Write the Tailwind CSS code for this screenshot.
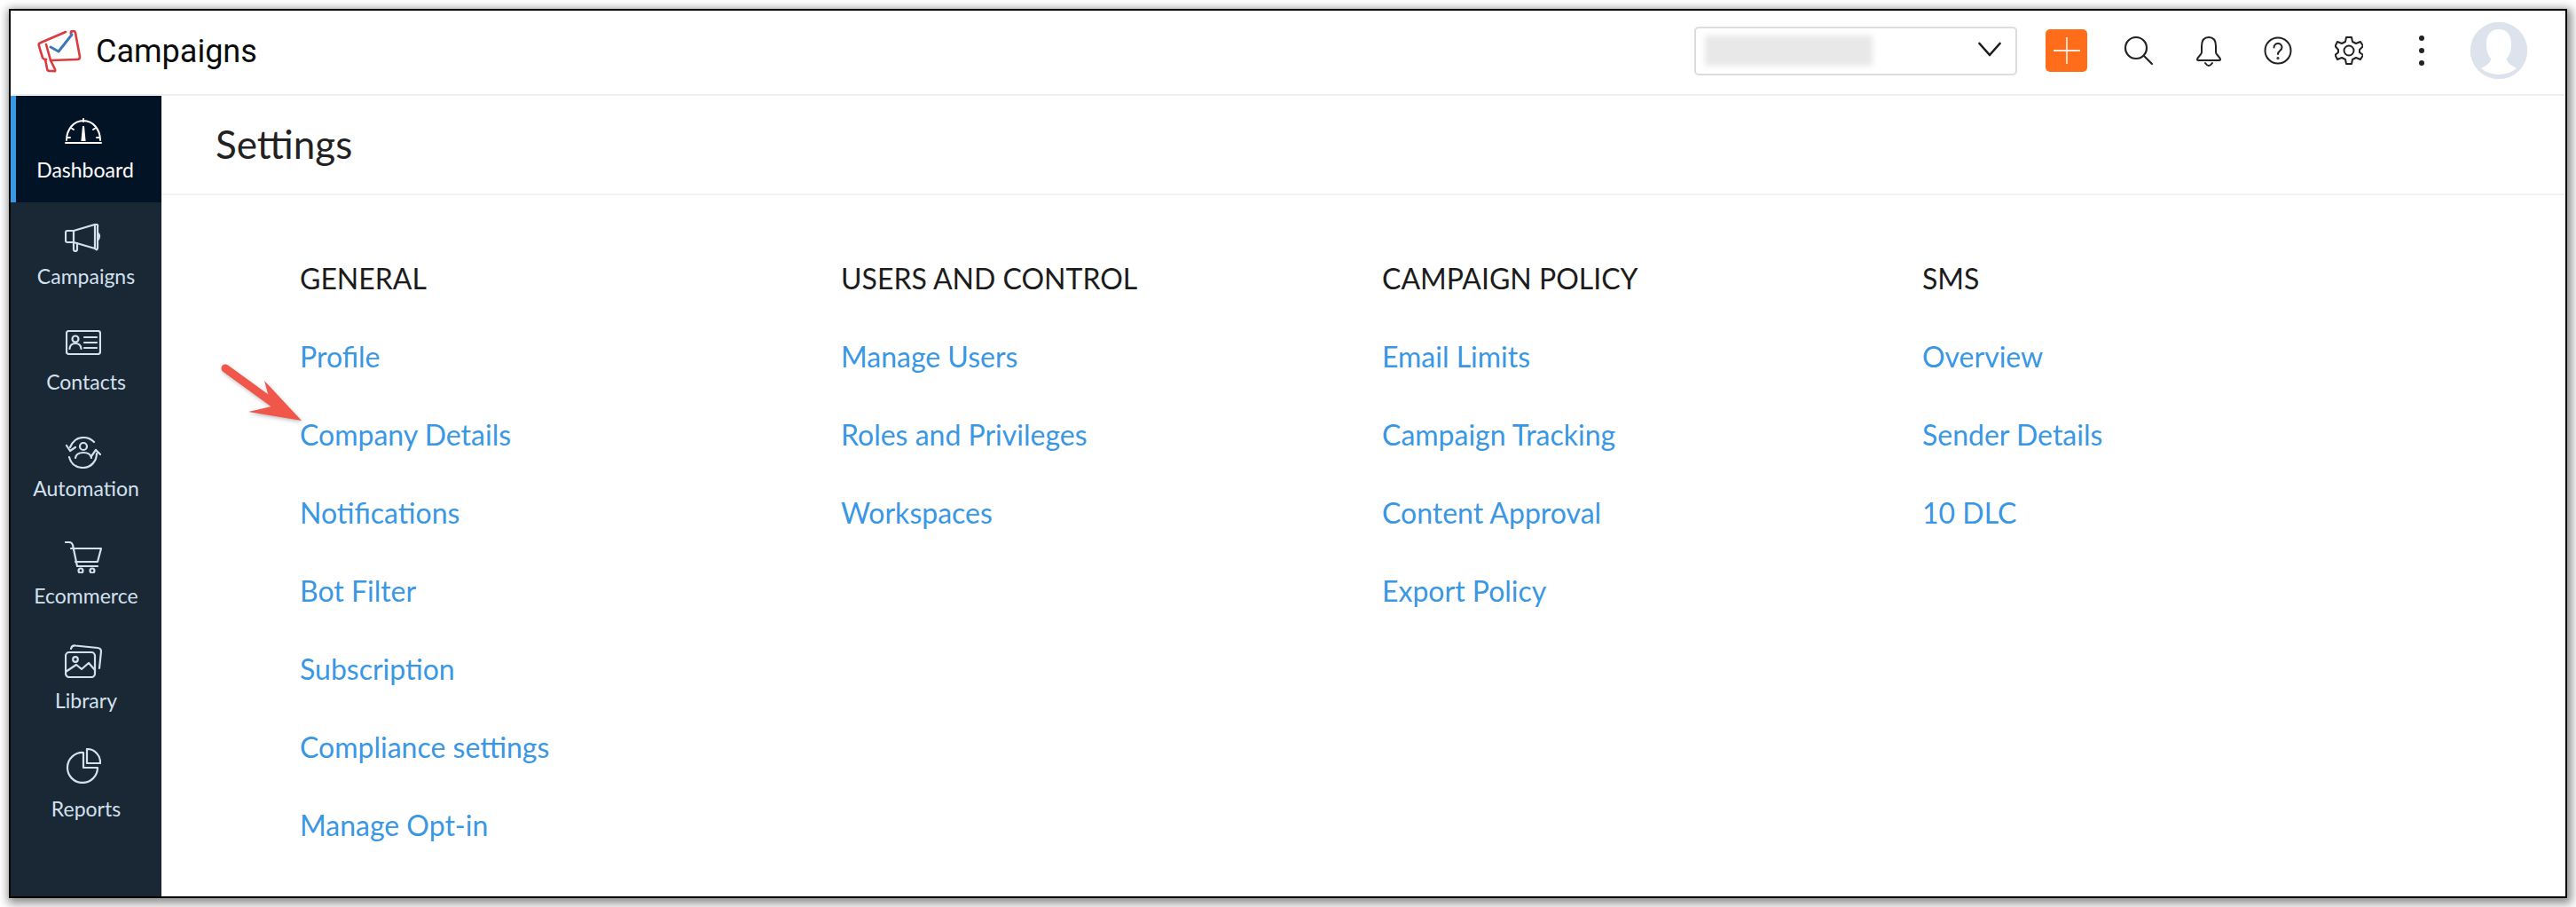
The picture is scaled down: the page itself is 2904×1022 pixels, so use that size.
<!DOCTYPE html>
<html>
<head>
<meta charset="utf-8">
<script src="https://cdn.jsdelivr.net/npm/@tailwindcss/browser@4"></script>
</head>
<body class="bg-white overflow-hidden font-['Lato',sans-serif]">
<div class="w-[2904px] h-[1022px] p-[10px]">
  <div class="relative w-[2884px] h-[1002px] border-2 border-black bg-white flex flex-col shadow-[2px_3px_10px_3px_rgba(0,0,0,0.45)]">
    <header class="h-[96px] shrink-0 border-b-2 border-[#eeeff1] flex items-center">
      <svg class="ml-[30px] w-[50px] h-[48px] -mt-[2px]" viewBox="0 0 50 48" fill="none" stroke="#db3a3f" stroke-width="2.6" stroke-linejoin="round" stroke-linecap="round">
        <path d="M32 2 L4 14 Q1 15 2 18 L6 31 Q7 33 10 33"/>
        <path d="M41 1 Q37 1 38 4"/>
        <path d="M39 1 Q42 0 43 3 L48 30 Q48 33 45 33 L15 34 L10 16"/>
        <path d="M15 34 L20 44 Q21 47 18 46 L14 46 Q11 46 11 43 L9 33"/>
        <path d="M15 19 L24 24 L39 5" stroke="#3d78b9" stroke-width="3"/>
      </svg>
      <span class="ml-[16px] text-[36px] leading-none text-[#0c0c0c] font-['Roboto',sans-serif] -mt-[2px]">Campaigns</span>
      <div class="ml-auto flex items-center h-full relative w-[982px]">
        <div class="w-[364px] h-[55px] -mt-[4px] rounded-[5px] border-2 border-[#dcdcdc] flex items-center overflow-hidden relative shrink-0">
          <div class="ml-[10px] w-[189px] h-[34px] bg-[#e8e8e8] blur-[3px]"></div>
          <svg class="absolute left-[318px] top-[15px] w-[26px] h-[18px]" viewBox="0 0 26 18" fill="none" stroke="#1b1b1b" stroke-width="2.6" stroke-linecap="round" stroke-linejoin="round"><path d="M1.5 2 L13 15 L24.5 2"/></svg>
        </div>
        <div class="ml-[32px] -mt-[4px] w-[47px] h-[48px] rounded-[5px] bg-[#ff6c1a] flex items-center justify-center shrink-0">
          <svg class="w-[30px] h-[30px]" viewBox="0 0 30 30" stroke="#ffe9dc" stroke-width="1.8"><path d="M15 0 V30 M0 15 H30"/></svg>
        </div>
        <svg class="ml-[41px] -mt-[4px] w-[34px] h-[34px] shrink-0" viewBox="0 0 34 34" fill="none" stroke="#222" stroke-width="2.2" stroke-linecap="round"><circle cx="14" cy="14" r="12"/><path d="M23 23 L32 32"/></svg>
        <svg class="ml-[47px] -mt-[2px] w-[30px] h-[36px] shrink-0" viewBox="0 0 30 36" fill="none" stroke="#222" stroke-width="2" stroke-linecap="round" stroke-linejoin="round"><path d="M15 2 C9 2 7 7 7 12 V19 C7 22 2 24 2 27 Q2 28 4 28 H26 Q28 28 28 27 C28 24 23 22 23 19 V12 C23 7 21 2 15 2 Z"/><path d="M11 31 Q15 37 19 31"/></svg>
        <svg class="ml-[47px] -mt-[4px] w-[32px] h-[32px] shrink-0" viewBox="0 0 32 32" fill="none" stroke="#222" stroke-width="2" stroke-linecap="round"><circle cx="16" cy="16" r="14.5"/><path d="M11.5 12.5 C11.5 6.5 20.5 6.5 20.5 12.5 C20.5 16 16 16 16 20"/><circle cx="16" cy="24.5" r="0.6"/></svg>
        <svg class="ml-[48px] -mt-[4px] w-[32px] h-[34px] shrink-0" viewBox="0 0 32 34" fill="none" stroke="#222" stroke-width="2" stroke-linejoin="round"><path d="M13 2 H19 L20 7 L24 9 L29 7 L32 12 L28 16 V19 L32 22 L29 27 L24 25 L20 27 L19 32 H13 L12 27 L8 25 L3 27 L0.5 22 L4 19 V16 L0.5 12 L3 7 L8 9 L12 7 Z"/><circle cx="16" cy="17" r="5.5"/></svg>
        <div class="ml-[63px] -mt-[4px] flex flex-col gap-[8px] shrink-0">
          <div class="w-[6px] h-[6px] rounded-full bg-[#222]"></div>
          <div class="w-[6px] h-[6px] rounded-full bg-[#222]"></div>
          <div class="w-[6px] h-[6px] rounded-full bg-[#222]"></div>
        </div>
        <svg class="ml-[52px] -mt-[4px] w-[64px] h-[64px] shrink-0" viewBox="0 0 64 64"><circle cx="32" cy="32" r="32" fill="#dde3ec"/><path d="M32 8 C22 8 18 15 18 25 C18 33 20 37 23 41 C23 46 19 48 12 52 A32 32 0 0 0 52 52 C45 48 41 46 41 41 C44 37 46 33 46 25 C46 15 42 8 32 8 Z" fill="#fff"/><circle cx="32" cy="32" r="31" fill="none" stroke="#dde3ec" stroke-width="2"/></svg>
      </div>
    </header>
    <div class="flex flex-1 min-h-0">
      <nav class="w-[170px] shrink-0 bg-[#1a2735] flex flex-col text-[#d3e1ef] text-[23px] leading-none">
        <a class="h-[120px] bg-[#021326] border-l-[6px] border-[#3a97e3] text-white flex flex-col items-center pt-[25px] pr-[6px]">
          <svg class="w-[42px] h-[30px] ml-[-6px]" viewBox="0 0 42 30" fill="none" stroke="#fff" stroke-width="2" stroke-linecap="round"><path d="M2 25 C2 13 10 3 21 3 C32 3 40 13 40 25 M1 28 H41 M21 1 V4 M7 11 L10 13 M35 11 L32 13 M3 22 H6 M39 22 H36"/><path d="M21 9 L19.5 25 H22.5 Z" fill="#fff"/></svg>
          <span class="mt-[17px] ml-[-2px]">Dashboard</span>
        </a>
        <a class="h-[120px] flex flex-col items-center pt-[24px]">
          <svg class="w-[42px] h-[32px] ml-[-6px]" viewBox="0 0 42 32" fill="none" stroke="#d3e1ef" stroke-width="2.2" stroke-linecap="round" stroke-linejoin="round"><path d="M1 10 Q1 8 3 8 H10 L34 1 V28 L10 21 H3 Q1 21 1 19 Z"/><path d="M10 8 V21 M34 1 Q38 0 37 4 V27 Q37 31 34 28 M37 10 Q41 14 37 19 M10 21 V29 Q10 31 12 31 Q14 31 14 29 V22"/></svg>
          <span class="mt-[16px]">Campaigns</span>
        </a>
        <a class="h-[120px] flex flex-col items-center pt-[24px]">
          <svg class="w-[40px] h-[28px] ml-[-6px]" viewBox="0 0 40 28" fill="none" stroke="#d3e1ef" stroke-width="2.2" stroke-linecap="round" stroke-linejoin="round"><rect x="1" y="1" width="38" height="26" rx="2.5"/><circle cx="11" cy="10" r="3.5"/><path d="M4.5 21 Q5 15 11 15 Q17 15 17.5 21 M21 8 H35 M21 14 H35 M21 20 H35"/></svg>
          <span class="mt-[19px]">Contacts</span>
        </a>
        <a class="h-[120px] flex flex-col items-center pt-[24px]">
          <svg class="w-[40px] h-[36px] ml-[-6px]" viewBox="0 0 40 36" fill="none" stroke="#d3e1ef" stroke-width="2.2" stroke-linecap="round" stroke-linejoin="round"><path d="M5 12 C8 5 13 1 20 1 C25 1 29 3 32 6"/><path d="M35 19 C35 28 28 35 20 35 C12 35 6 31 4 23"/><path d="M1 10 L5 16 L11 12 M29 22 L34 15 L39 20"/><circle cx="20" cy="11" r="4"/><path d="M11 24 Q12 18 20 18 Q28 18 29 24"/></svg>
          <span class="mt-[11px]">Automation</span>
        </a>
        <a class="h-[120px] flex flex-col items-center pt-[22px]">
          <svg class="w-[42px] h-[36px] ml-[-6px]" viewBox="0 0 42 36" fill="none" stroke="#d3e1ef" stroke-width="2.2" stroke-linecap="round" stroke-linejoin="round"><path d="M1 1 H5 Q8 1 9 4 L14 28 H37 M7 8 H41 L37 23 H12"/><circle cx="18" cy="33" r="2.5"/><circle cx="31" cy="33" r="2.5"/></svg>
          <span class="mt-[14px]">Ecommerce</span>
        </a>
        <a class="h-[120px] flex flex-col items-center pt-[18px]">
          <svg class="w-[42px] h-[38px] ml-[-6px]" viewBox="0 0 42 38" fill="none" stroke="#d3e1ef" stroke-width="2.2" stroke-linecap="round" stroke-linejoin="round"><rect x="1" y="9" width="33" height="28" rx="4"/><path d="M7 5 Q8 1 12 1.5 L37 4 Q41 4.5 41 8 L39 27"/><circle cx="12" cy="17" r="2.8"/><path d="M1 31 L13 23 L19 28 L27 21 L34 29"/></svg>
          <span class="mt-[14px]">Library</span>
        </a>
        <a class="h-[120px] flex flex-col items-center pt-[15px]">
          <svg class="w-[40px] h-[40px] ml-[-6px]" viewBox="0 0 40 40" fill="none" stroke="#d3e1ef" stroke-width="2.2" stroke-linejoin="round"><path d="M20 5 A17 17 0 1 0 36 22 L20 22 Z"/><path d="M24 1 A15 15 0 0 1 39 17 L24 17 Z"/></svg>
          <span class="mt-[17px]">Reports</span>
        </a>
      </nav>
      <main class="flex-1 min-w-0 relative">
        <div class="h-[112px] border-b-2 border-[#f1f3f5] flex items-center pl-[61px]">
          <h1 class="text-[44px] leading-none text-[#222] -mt-[2px]">Settings</h1>
        </div>
        <div class="grid grid-cols-[610px_610px_609px_1fr] pl-[156px] pt-[50px] text-[32px] leading-[88px] text-[#3a97e3]">
          <div class="flex flex-col">
            <h2 class="text-[#1c1c1c] text-[32px]">GENERAL</h2>
            <a>Profile</a><a>Company Details</a><a>Notifications</a><a>Bot Filter</a><a>Subscription</a><a>Compliance settings</a><a>Manage Opt-in</a>
          </div>
          <div class="flex flex-col">
            <h2 class="text-[#1c1c1c] text-[32px]">USERS AND CONTROL</h2>
            <a>Manage Users</a><a>Roles and Privileges</a><a>Workspaces</a>
          </div>
          <div class="flex flex-col">
            <h2 class="text-[#1c1c1c] text-[32px]">CAMPAIGN POLICY</h2>
            <a>Email Limits</a><a>Campaign Tracking</a><a>Content Approval</a><a>Export Policy</a>
          </div>
          <div class="flex flex-col">
            <h2 class="text-[#1c1c1c] text-[32px]">SMS</h2>
            <a>Overview</a><a>Sender Details</a><a>10 DLC</a>
          </div>
        </div>
        <svg class="absolute left-[66px] top-[301px] w-[96px] h-[72px]" viewBox="0 0 96 72" style="filter:drop-shadow(1px 2px 2px rgba(0,0,0,.25))"><path d="M6 6 L68 51" stroke="#f0564a" stroke-width="9" stroke-linecap="round"/><path d="M50 20 L92 65 L32 55 L58 49 Z" fill="#f0564a"/></svg>
      </main>
    </div>
  </div>
</div>
</body>
</html>
